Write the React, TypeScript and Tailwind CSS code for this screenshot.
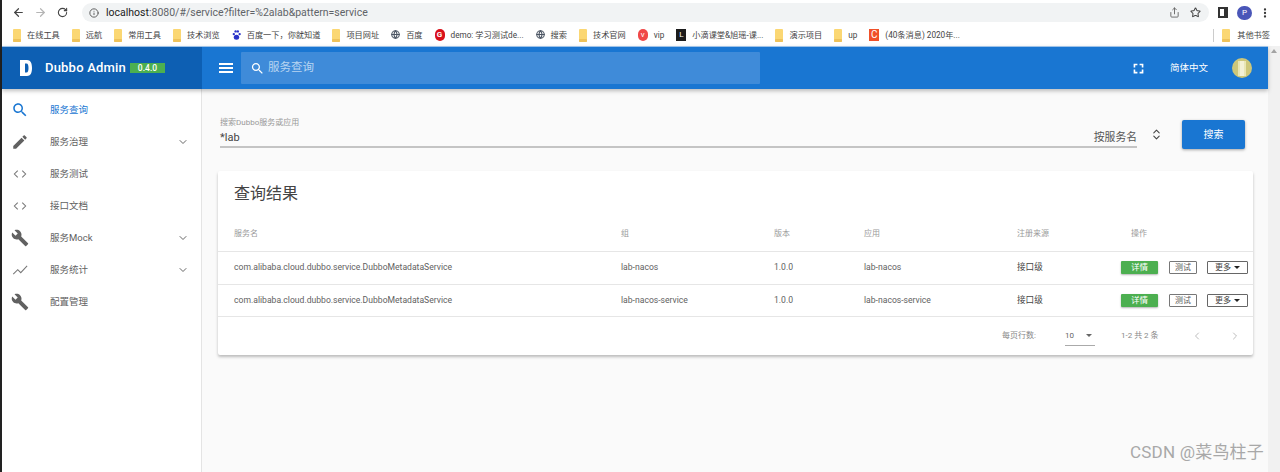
import { ArrowLeft, ArrowRight, RotateCw, Info, Share, Star, MoreVertical, ChevronDown, ChevronLeft, ChevronRight, ChevronsUpDown, Globe } from "lucide-react"

const font = { fontFamily: "Roboto, 'Noto Sans CJK SC', sans-serif" }

const paths = {
  search: "M15.5 14h-.79l-.28-.27C15.41 12.59 16 11.11 16 9.5 16 5.91 13.09 3 9.5 3S3 5.91 3 9.5 5.91 16 9.5 16c1.61 0 3.09-.59 4.23-1.57l.27.28v.79l5 4.99L20.49 19l-4.99-5zm-6 0C7.01 14 5 11.99 5 9.5S7.01 5 9.5 5 14 7.01 14 9.5 11.99 14 9.5 14z",
  pencil: "M3 17.25V21h3.75L17.81 9.94l-3.75-3.75L3 17.25zM20.71 7.04c.39-.39.39-1.02 0-1.41l-2.34-2.34c-.39-.39-1.02-.39-1.41 0l-1.83 1.83 3.75 3.75 1.83-1.83z",
  wrench: "M22.7 19l-9.1-9.1c.9-2.3.4-5-1.5-6.9-2-2-5-2.4-7.4-1.3L9 6 6 9 1.6 4.7C.4 7.1.9 10.1 2.9 12.1c1.9 1.9 4.6 2.4 6.9 1.5l9.1 9.1c.4.4 1 .4 1.4 0l2.3-2.3c.5-.4.5-1.1.1-1.4z",
}

function Mdi({ d, className }: { d: string; className?: string }) {
  return (
    <svg viewBox="0 0 24 24" className={className} fill="currentColor">
      <path d={d} />
    </svg>
  )
}

// the code and chart icons are thin in the shot, so they get strokes
function CodeIcon() {
  return (
    <svg viewBox="0 0 24 24" className="w-[18px] h-[18px] text-[#777]" fill="none" stroke="currentColor" strokeWidth="1.4">
      <path d="M9 7.500 4.500 12 9 16.500M15 7.500l4.500 4.500-4.500 4.500" />
    </svg>
  )
}

function ChartIcon() {
  return (
    <svg viewBox="0 0 24 24" className="w-[18px] h-[18px] text-[#777]" fill="none" stroke="currentColor" strokeWidth="1.4">
      <path d="M3 17.500l6-6 4 4 8.500-9" />
    </svg>
  )
}

function Folder() {
  return (
    <svg viewBox="0 0 8 13" className="w-2 h-[13px] shrink-0">
      <rect width="8" height="13" rx="1" fill="#fbd773" />
      <rect y="10" width="8" height="3" rx="1" fill="#eec25a" />
    </svg>
  )
}

function BookmarkIcon({ type }: { type: string }) {
  if (type === "folder") return <Folder />
  if (type === "globe") return <Globe className="w-[9px] h-[11px] text-[#4b5563] shrink-0" strokeWidth={3} />
  if (type === "paw") {
    return (
      <svg viewBox="0 0 10 12" className="w-[9px] h-[12px] shrink-0" fill="#2932c8">
        <circle cx="2" cy="5" r="1.3" />
        <circle cx="4" cy="2" r="1.3" />
        <circle cx="6.5" cy="2" r="1.3" />
        <circle cx="8.5" cy="5" r="1.3" />
        <ellipse cx="5" cy="8.5" rx="3" ry="2.8" />
      </svg>
    )
  }
  if (type === "g") return <span className="w-[10px] h-[12px] rounded-full bg-[#d9101a] text-white text-[8px] leading-[12px] text-center font-bold shrink-0">G</span>
  if (type === "vip") return <span className="w-[10px] h-[12px] rounded-full bg-[#f04848] text-white text-[8px] leading-[12px] text-center shrink-0">v</span>
  if (type === "black") return <span className="w-[10px] h-[12px] bg-[#1c1c1c] text-white text-[8px] leading-[12px] text-center shrink-0">L</span>
  return <span className="w-[10px] h-[12px] bg-[#f0512a] text-white text-[10px] leading-[12px] text-center shrink-0">C</span>
}

const bookmarks = [
  { icon: "folder", label: "在线工具" },
  { icon: "folder", label: "远航" },
  { icon: "folder", label: "常用工具" },
  { icon: "folder", label: "技术浏览" },
  { icon: "paw", label: "百度一下，你就知道" },
  { icon: "folder", label: "项目网址" },
  { icon: "globe", label: "百度" },
  { icon: "g", label: "demo: 学习测试de..." },
  { icon: "globe", label: "搜索" },
  { icon: "folder", label: "技术官网" },
  { icon: "vip", label: "vip" },
  { icon: "black", label: "小滴课堂&旭瑶-课..." },
  { icon: "folder", label: "演示项目" },
  { icon: "folder", label: "up" },
  { icon: "c", label: "(40条消息) 2020年..." },
]

const menu = [
  { icon: "search", label: "服务查询", active: true },
  { icon: "pencil", label: "服务治理", more: true },
  { icon: "code", label: "服务测试" },
  { icon: "code", label: "接口文档" },
  { icon: "wrench", label: "服务Mock", more: true },
  { icon: "chart", label: "服务统计", more: true },
  { icon: "wrench", label: "配置管理" },
]

const gridCols = "grid grid-cols-[387px_153px_90px_153px_114px_1fr] items-center pl-4"

const rows = [
  { group: "lab-nacos", app: "lab-nacos" },
  { group: "lab-nacos-service", app: "lab-nacos-service" },
]

function MenuIcon({ name }: { name: string }) {
  if (name === "code") return <CodeIcon />
  if (name === "chart") return <ChartIcon />
  return <Mdi d={name === "search" ? paths.search : name === "pencil" ? paths.pencil : paths.wrench} className="w-[18px] h-[18px]" />
}

function ChromeBar() {
  return (
    <div className="bg-white">
      <div className="h-[23px] flex items-center pt-[2px] pr-[9px] text-[#444]">
        <ArrowLeft className="w-[13px] h-[13px] ml-[10px]" strokeWidth={2.2} />
        <ArrowRight className="w-[13px] h-[13px] ml-[9px] text-[#b5b5b5]" strokeWidth={2.2} />
        <RotateCw className="w-[11px] h-[11px] ml-[10px]" strokeWidth={2.4} />
        <div className="ml-[14px] flex-1 h-[19px] rounded-full bg-[#f1f3f4] flex items-center pl-[7px] pr-[3px]">
          <Info className="w-[10px] h-[10px] text-[#555]" strokeWidth={2.2} />
          <span className="ml-[7px] text-[10.5px] text-[#5f6368]"><span className="text-[#222]">localhost</span>:8080/#/service?filter=%2alab&amp;pattern=service</span>
          <Share className="w-[11px] h-[11px] ml-auto text-[#666]" />
          <Star className="w-[11px] h-[11px] ml-[10px] text-[#444]" strokeWidth={2.2} />
          <span className="w-[5px]" />
        </div>
        <div className="ml-[9px] w-[10px] h-[11px] border-2 border-[#333] border-r-[4px]" />
        <span className="ml-[9px] w-[15px] h-[14px] rounded-full bg-[#4a56b8] text-white text-[8px] leading-[14px] text-center">P</span>
        <MoreVertical className="w-[12px] h-[12px] ml-[7px] text-[#333]" strokeWidth={2.6} />
      </div>
      <div className="h-[23px] flex items-center pt-[1px] pl-[11px] pr-[10px] gap-3 text-[8.200px] text-[#444]">
        {bookmarks.map(b => (
          <div key={b.label} className="flex items-center gap-[6px] whitespace-nowrap">
            <BookmarkIcon type={b.icon} />
            <span>{b.label}</span>
          </div>
        ))}
        <div className="ml-auto h-[13px] border-l border-[#ccc] pl-2 flex items-center gap-[7px] whitespace-nowrap">
          <Folder />
          <span>其他书签</span>
        </div>
      </div>
    </div>
  )
}

function AppBar() {
  return (
    <div className="h-[43px] flex border-t border-[#9fc3e8] bg-[#1976d2] shadow-[0_2px_4px_rgba(0,0,0,0.25)] relative z-10">
      <div className="w-[200px] bg-[#0d5fb3] flex items-center pl-[17px]">
        <svg viewBox="0 0 14 16" className="w-[14px] h-[16px]">
          <path fill="#fff" fillRule="evenodd" d="M1 0h7c3.500 0 5 3 5 8s-1.500 8-5 8H1zM6 3.500v9h1.500c1.500 0 2-2 2-4.500s-.5-4.500-2-4.500z" />
        </svg>
        <span className="ml-[12px] text-white text-[13px] font-medium tracking-[0.2px]">Dubbo Admin</span>
        <span className="ml-[4px] w-[35px] h-[10px] bg-[#4caf50] text-white text-[8.500px] leading-[10px] text-center font-medium">0.4.0</span>
      </div>
      <div className="flex-1 flex items-center pl-[17px] pr-[16px]">
        <div className="w-[14px] flex flex-col gap-[2.500px]">
          <span className="h-[1.500px] bg-white" />
          <span className="h-[1.500px] bg-white" />
          <span className="h-[1.500px] bg-white" />
        </div>
        <div className="ml-[8px] w-[519px] h-[32px] bg-[#3f8bd9] flex items-center pl-[9px] rounded-[1px]">
          <Mdi d={paths.search} className="w-[15px] h-[15px] text-white" />
          <span className="ml-[3px] text-[11.500px] text-[#b9d5f1]">服务查询</span>
        </div>
        <svg viewBox="0 0 24 24" className="ml-auto w-[13px] h-[13px]" fill="#fff">
          <path d="M3 3h7v3H6v4H3zM14 3h7v7h-3V6h-4zM3 14h3v4h4v3H3zM18 14h3v7h-7v-3h4z" />
        </svg>
        <span className="ml-[25px] text-white text-[9.500px]">简体中文</span>
        <div className="ml-[24px] w-[20px] h-[20px] rounded-full bg-[#cdc77a] flex items-center justify-center">
          <div className="w-[8px] h-[15px] bg-[#f3f1d6] border-x-2 border-[#e9e6b5]" />
        </div>
      </div>
    </div>
  )
}

function Sidebar() {
  return (
    <div className="w-[200px] bg-white border-r border-[#e4e4e4] pt-[5px] shrink-0">
      {menu.map(m => (
        <div key={m.label} className={`h-[32px] flex items-center pl-[9px] pr-[12px] ${m.active ? "text-[#1976d2]" : "text-[#616161]"}`}>
          <MenuIcon name={m.icon} />
          <span className="ml-[21px] text-[9.500px] mr-auto">{m.label}</span>
          {m.more && <ChevronDown className="w-[12px] h-[12px] text-[#666]" strokeWidth={2} />}
        </div>
      ))}
    </div>
  )
}

function ResultCard() {
  return (
    <div className="mt-[22px] mr-[15px] bg-white rounded-[2px] shadow-[0_2px_3px_rgba(0,0,0,0.25)]">
      <div className="h-[45px] pl-4 flex items-center text-[#444] text-[16px]">查询结果</div>
      <div className={`${gridCols} h-[36px] border-b border-[#e6e6e6] text-[8px] text-[#9a9a9a]`}>
        <span>服务名</span>
        <span>组</span>
        <span>版本</span>
        <span>应用</span>
        <span>注册来源</span>
        <span>操作</span>
      </div>
      {rows.map(r => (
        <div key={r.group} className={`${gridCols} h-[32.500px] border-b border-[#e6e6e6] text-[8.600px] text-[#616161]`}>
          <span>com.alibaba.cloud.dubbo.service.DubboMetadataService</span>
          <span>{r.group}</span>
          <span>1.0.0</span>
          <span>{r.app}</span>
          <span className="text-[#444]">接口级</span>
          <div className="flex items-center -ml-[10px]">
            <span className="w-[37px] h-[13px] bg-[#4caf50] text-white text-[8.500px] leading-[13px] text-center rounded-[1px] shadow-[0_1px_2px_rgba(0,0,0,0.3)]">详情</span>
            <span className="ml-[11px] w-[28px] h-[13px] border border-[#777] text-[8px] leading-[11px] text-center rounded-[1px] text-[#555]">测试</span>
            <span className="ml-[10px] w-[41px] h-[13px] border border-[#666] text-[8px] leading-[11px] flex items-center justify-center gap-[3px] rounded-[1px] text-[#444]">
              更多
              <span className="border-x-[3px] border-x-transparent border-t-[3px] border-t-[#222]" />
            </span>
          </div>
        </div>
      ))}
      <div className="h-[38px] flex items-center text-[8px] text-[#888]">
        <span className="ml-[784px]">每页行数:</span>
        <div className="ml-[29px] w-[30px] h-[22px] pt-[2px] border-b border-[#aaa] flex items-center text-[#666] self-start mt-[7px]">
          <span>10</span>
          <span className="ml-[12px] border-x-[3px] border-x-transparent border-t-[3px] border-t-[#666]" />
        </div>
        <span className="ml-[26px]">1-2 共 2 条</span>
        <ChevronLeft className="ml-[32px] w-[12px] h-[12px] text-[#bdbdbd]" />
        <ChevronRight className="ml-[26px] w-[12px] h-[12px] text-[#bdbdbd]" />
      </div>
    </div>
  )
}

export default function App() {
  return (
    <div className="relative w-[1280px] h-[472px] overflow-hidden flex bg-white" style={font}>
      <div className="w-[2px] bg-[#222] shrink-0" />
      <div className="flex-1 flex flex-col min-w-0">
        <ChromeBar />
        <div className="flex-1 flex min-h-0">
          <div className="flex-1 flex flex-col min-w-0">
            <AppBar />
            <div className="flex-1 flex min-h-0">
              <Sidebar />
              <div className="flex-1 bg-[#fafafa] pl-[16px] pt-[31px]">
                <div className="flex items-start">
                  <div className="ml-[2px] w-[917px] h-[28px] border-b-2 border-[#c4c4c4]">
                    <div className="-mt-[2px] text-[8px] leading-[10px] text-[#999]">搜索Dubbo服务或应用</div>
                    <div className="mt-[1px] flex items-center justify-between text-[#444] text-[11px] leading-[18px]">
                      <span>*lab</span>
                      <span className="text-[10.800px] text-[#555]">按服务名</span>
                    </div>
                  </div>
                  <ChevronsUpDown className="ml-[13px] mt-[7px] w-[13px] h-[15px] text-[#444]" />
                  <div className="ml-[19px] w-[63px] h-[29px] bg-[#1976d2] text-white text-[10px] flex items-center justify-center rounded-[2px] shadow-[0_1px_3px_rgba(0,0,0,0.35)]">搜索</div>
                </div>
                <ResultCard />
              </div>
            </div>
          </div>
          {/* page scrollbar */}
          <div className="w-[12px] bg-[#f1f1f1] shrink-0 flex justify-center pt-[3px]">
            <span className="h-0 border-x-[3px] border-x-transparent border-b-[4px] border-b-[#a3a3a3]" />
          </div>
        </div>
      </div>
      {/* csdn watermark */}
      <div className="absolute right-[16px] bottom-[7px] text-[17px] text-[#a8a8a8] tracking-[0.2px]">CSDN @菜鸟柱子</div>
    </div>
  )
}
